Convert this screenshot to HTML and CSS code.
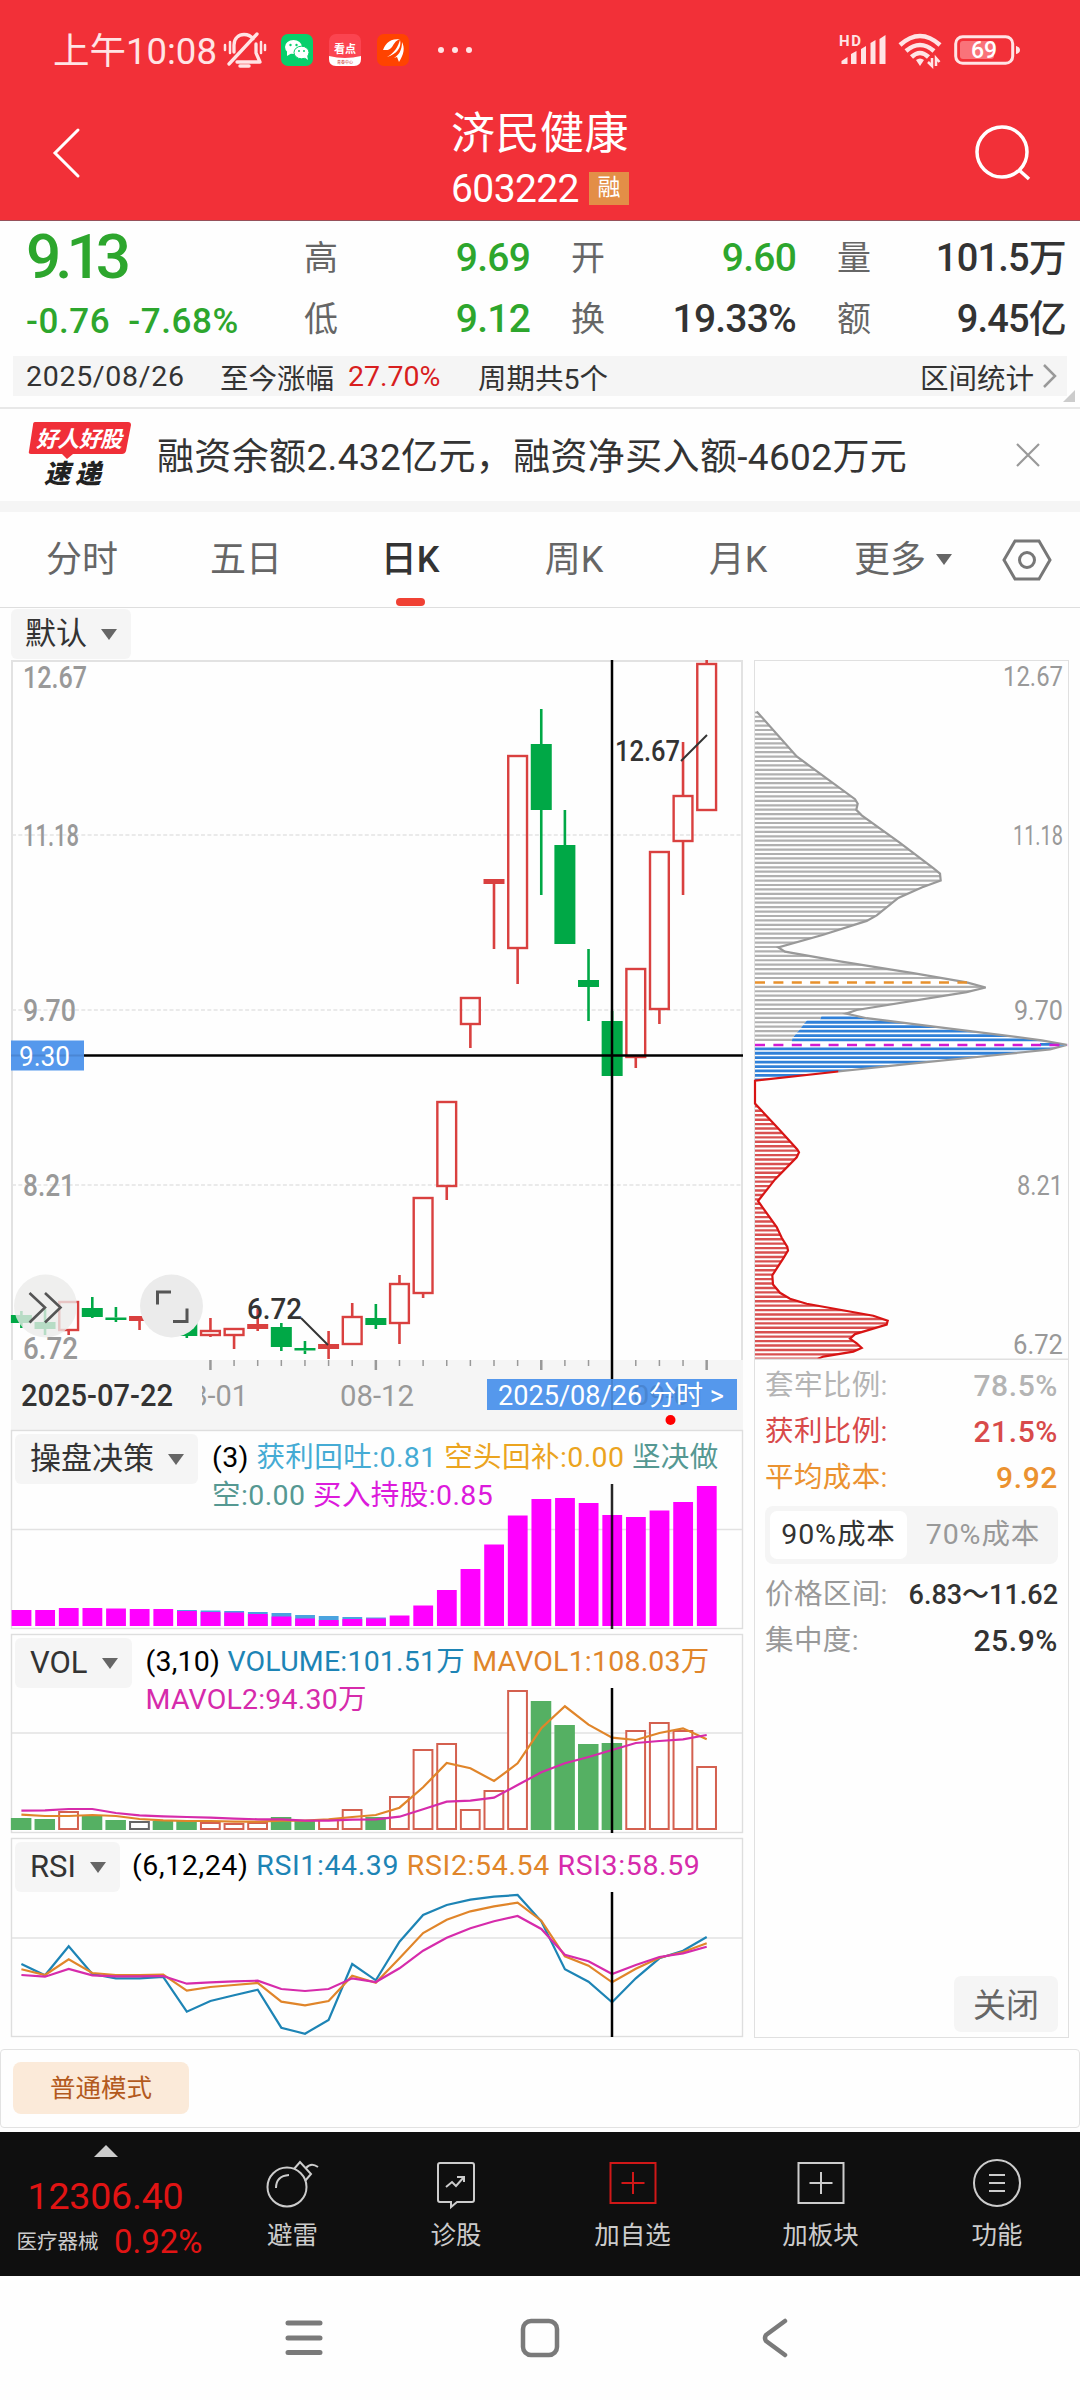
FILE: index.html
```html
<!DOCTYPE html>
<html lang="zh-CN">
<head>
    <meta charset="UTF-8">
    <title>济民健康 603222</title>
    <link rel="stylesheet" href="styles.css">
</head>
<body>
    <div class="page">
        <!-- 顶部 -->
        <header class="header">
            <div class="status-bar">
                <span class="clock">上午10:08</span>
                <svg class="bell" width="44" height="38" viewBox="0 0 44 38" fill="none" stroke="#ffe4e5" stroke-width="3.300" stroke-linecap="round" stroke-linejoin="round">
                    <path d="M34 3L6 33M11 21V14C11 7 16 3.500 21 3.500C25 3.500 28 5 30 8M33 13V22L37 31H14"/>
                    <path d="M2 14V19M7 11V22M38 11V22M42 14V19" stroke-width="2.500"/>
                    <path d="M17 35H26" stroke-width="3.500"/>
                </svg>
                <svg class="app-icon" width="32" height="32" viewBox="0 0 32 32">
                    <rect width="32" height="32" rx="7" fill="#07cf6b"/>
                    <ellipse cx="12.500" cy="13" rx="8.500" ry="7" fill="#fff"/>
                    <path d="M6 17l0 5 5-3z" fill="#fff"/>
                    <ellipse cx="20.500" cy="18.500" rx="7.500" ry="6.300" fill="#fff" stroke="#07cf6b"/>
                    <path d="M23 23l4 3-1-5z" fill="#fff"/>
                    <g fill="#07cf6b"><circle cx="9.500" cy="11" r="1.200"/><circle cx="15.500" cy="11" r="1.200"/><circle cx="18" cy="17" r="1"/><circle cx="23" cy="17" r="1"/></g>
                </svg>
                <svg class="app-icon" width="32" height="32" viewBox="0 0 32 32">
                    <rect width="32" height="32" rx="7" fill="#fb4450"/>
                    <path d="M0 22Q16 26 32 22V25Q32 32 25 32H7Q0 32 0 25Z" fill="#fff"/>
                    <text x="16" y="19" text-anchor="middle" font-size="11" font-weight="bold" fill="#fff">看点</text>
                    <text x="16" y="30" text-anchor="middle" font-size="4" fill="#c33">青春中心</text>
                </svg>
                <svg class="app-icon" width="32" height="32" viewBox="0 0 32 32">
                    <rect width="32" height="32" rx="7" fill="#ff4300"/>
                    <path d="M6 16C9 8 14 5 23 5C18 7 17 10 15 13C12 17 9 16 6 16Z" fill="#fff"/>
                    <path d="M10 23C17 19 21 13 23 6C25 13 20 20 10 23ZM17 24C22 21 25 16 25 8C28 14 27 20 22 28L20 23Z" fill="#fff"/>
                </svg>
                <svg class="dots" width="34" height="6" viewBox="0 0 34 6" fill="#ffe4e5"><circle cx="3" cy="3" r="3"/><circle cx="17" cy="3" r="3"/><circle cx="31" cy="3" r="3"/></svg>
                <svg class="signal" width="48" height="32" viewBox="0 0 48 32" fill="#ffe4e5">
                    <text x="0" y="12" font-size="15" font-weight="bold" textLength="22">HD</text>
                    <path d="M2.500 30V27L8.500 23V30ZM12 30V20L17.500 17V30ZM22 30V15L27 12V30ZM31.500 30V9L36.500 6V30ZM40.500 30V5L46.500 1V30Z"/>
                </svg>
                <svg class="wifi" width="44" height="34" viewBox="0 0 44 34" fill="none" stroke="#ffe4e5" stroke-width="4.500">
                    <path d="M2 12Q22 -6 42 12M8 18Q22 6 36 18M13.500 24Q22 16 30.500 24"/>
                    <path d="M18 27Q22 24 26 27L22 33Z" fill="#ffe4e5" stroke="none"/>
                    <path d="M34 25V33L30 29M38 33V25L41.500 29" stroke-width="2.500"/>
                </svg>
                <svg class="battery" width="67" height="30" viewBox="0 0 67 30">
                    <rect x="1.700" y="1.700" width="57" height="26.600" rx="7" fill="none" stroke="#ffe4e5" stroke-width="3"/>
                    <rect x="6" y="6" width="34" height="18" rx="3" fill="#f9737a"/>
                    <path d="M62 11V19Q66 18 66 15Q66 12 62 11Z" fill="#ffe4e5"/>
                    <text x="30" y="23" text-anchor="middle" font-size="23" font-weight="500" fill="#fff">69</text>
                </svg>
            </div>
            <div class="title-bar">
                <svg width="28" height="50" viewBox="0 0 28 50" fill="none" stroke="#fff" stroke-width="3" stroke-linecap="round"><path d="M25 2L2 25L25 48"/></svg>
                <div class="title">
                    <div class="stock-name">济民健康</div>
                    <div class="stock-code"><span>603222</span><i class="badge">融</i></div>
                </div>
                <svg width="56" height="56" viewBox="0 0 56 56" fill="none" stroke="#fff" stroke-width="3.500"><circle cx="27" cy="27" r="25"/><path d="M44 45L54 54"/></svg>
            </div>
        </header>

        <!-- 行情 -->
        <section class="quote">
            <div class="price-box">
                <div class="price">9.13</div>
                <div class="change"><span>-0.76</span><span>-7.68%</span></div>
            </div>
            <dl class="metric m1"><dt>高</dt><dd class="green">9.69</dd><dt>低</dt><dd class="green">9.12</dd></dl>
            <dl class="metric m2"><dt>开</dt><dd class="green">9.60</dd><dt>换</dt><dd>19.33%</dd></dl>
            <dl class="metric m3"><dt>量</dt><dd>101.5万</dd><dt>额</dt><dd>9.45亿</dd></dl>
        </section>
        <div class="period-wrap">
            <div class="period">
                <span class="date">2025/08/26</span>
                <span class="rise">至今涨幅</span>
                <span class="pct">27.70%</span>
                <span>周期共5个</span>
                <span class="stat">区间统计</span>
                <svg width="14" height="26" viewBox="0 0 14 26" fill="none" stroke="#999" stroke-width="2.500"><path d="M1 2L12 13L1 24"/></svg>
            </div>
            <i class="corner"></i>
        </div>

        <!-- 资讯 -->
        <section class="news">
            <svg class="news-logo" width="104" height="68" viewBox="0 0 104 68">
                <path d="M7 1H100Q103 1 103 4L98 30Q97 33 94 33H45L39 38L34 33H3Q0 33 1 30L5 4Q5 1 7 1Z" fill="#f02f38"/>
                <g font-style="italic">
                    <text x="8" y="26" font-size="22" font-weight="700" textLength="86" fill="#fff">好人好股</text>
                    <text x="16" y="62" font-size="26" font-weight="900" textLength="57" fill="#222">速递</text>
                </g>
            </svg>
            <span class="news-text">融资余额2.432亿元，融资净买入额-4602万元</span>
            <svg width="26" height="26" viewBox="0 0 26 26" fill="none" stroke="#999" stroke-width="2.200"><path d="M2 2L24 24M24 2L2 24"/></svg>
        </section>

        <nav class="tabs">
            <span>分时</span>
            <span>五日</span>
            <span class="active">日K</span>
            <span>周K</span>
            <span>月K</span>
            <span class="more">更多<i class="arrow"></i></span>
            <svg width="50" height="42" viewBox="0 0 50 42" fill="none" stroke="#777" stroke-width="3"><path d="M13 2H37L48 21L37 40H13L2 21Z"/><circle cx="25" cy="21" r="7.500"/></svg>
        </nav>
        <div class="default-row"><span class="select">默认<i class="arrow"></i></span></div>

        <!-- 图表 -->
        <main class="charts">
            <div class="left-col">
                <svg id="kline" width="732" height="770" viewBox="11 660 732 770"></svg>
                <div class="panel">
                    <svg id="decision" width="732" height="199" viewBox="11 1430 732 199"></svg>
                    <div class="panel-head">
                        <span class="select">操盘决策<i class="arrow"></i></span>
                        <div class="legend legend-decision">(3) <b class="c-sky">获利回吐:0.81</b> <b class="c-gold">空头回补:0.00</b> <b class="c-teal">坚决做<br>空:0.00</b> <b class="c-mag">买入持股:0.85</b></div>
                    </div>
                </div>
                <div class="panel">
                    <svg id="vol" width="732" height="199" viewBox="11 1634 732 199"></svg>
                    <div class="panel-head">
                        <span class="select">VOL<i class="arrow"></i></span>
                        <div class="legend legend-vol">(3,10) <b class="c-blue">VOLUME:101.51万</b> <b class="c-orange">MAVOL1:108.03万</b><br><b class="c-pink">MAVOL2:94.30万</b></div>
                    </div>
                </div>
                <div class="panel">
                    <svg id="rsi" width="732" height="199" viewBox="11 1838 732 199"></svg>
                    <div class="panel-head">
                        <span class="select">RSI<i class="arrow"></i></span>
                        <div class="legend legend-rsi">(6,12,24) <b class="c-blue">RSI1:44.39</b> <b class="c-orange">RSI2:54.54</b> <b class="c-pink">RSI3:58.59</b></div>
                    </div>
                </div>
            </div>

            <aside class="chips">
                <svg id="chip" width="313" height="699" viewBox="755 661 313 699"></svg>
                <div class="chip-info">
                    <p class="gray"><span>套牢比例:</span><b>78.5%</b></p>
                    <p class="red"><span>获利比例:</span><b>21.5%</b></p>
                    <p class="orange"><span>平均成本:</span><b>9.92</b></p>
                    <div class="toggle"><span class="on">90%成本</span><span>70%成本</span></div>
                    <p><span>价格区间:</span><b class="range">6.83～11.62</b></p>
                    <p><span>集中度:</span><b>25.9%</b></p>
                </div>
                <button class="close-btn">关闭</button>
            </aside>
        </main>

        <div class="mode-box"><span class="mode">普通模式</span></div>

        <!-- 底部工具栏 -->
        <footer class="toolbar">
            <div class="index">
                <i class="up"></i>
                <div class="index-value">12306.40</div>
                <div class="index-name"><span>医疗器械</span><b>0.92%</b></div>
            </div>
            <div class="tool t1">
                <svg width="54" height="50" viewBox="0 0 54 50" fill="none" stroke="#ccc" stroke-width="2"><circle cx="21" cy="28" r="19.500"/><path d="M10 29Q10 17 23 16M28 10L34 3L45 15L39 22M40 9Q45 3 52 8"/></svg>
                <span>避雷</span>
            </div>
            <div class="tool t2">
                <svg width="40" height="50" viewBox="0 0 40 50" fill="none" stroke="#ccc" stroke-width="2"><path d="M4 4H36Q38 4 38 6V41Q38 43 36 43H21L15 48V43H4Q2 43 2 41V6Q2 4 4 4Z"/><path d="M10 28L16 23L20 27L28 18M21 18H28V23"/></svg>
                <span>诊股</span>
            </div>
            <div class="tool t3">
                <svg width="48" height="50" viewBox="0 0 48 50" fill="none" stroke="#d01818" stroke-width="2"><path d="M1.500 4H46.500V44H1.500ZM24 13V35M12.500 24H35.500"/></svg>
                <span>加自选</span>
            </div>
            <div class="tool t4">
                <svg width="48" height="50" viewBox="0 0 48 50" fill="none" stroke="#ccc" stroke-width="2"><path d="M1.500 4H46.500V44H1.500ZM24 13V35M12.500 24H35.500"/></svg>
                <span>加板块</span>
            </div>
            <div class="tool t5">
                <svg width="48" height="50" viewBox="0 0 48 50" fill="none" stroke="#ccc" stroke-width="2"><circle cx="24" cy="24" r="23"/><path d="M16 16H32M16 24H32M16 32H32"/></svg>
                <span>功能</span>
            </div>
        </footer>

        <div class="sys-nav">
            <svg width="38" height="40" viewBox="0 0 38 40" fill="none" stroke="#7a7a7a" stroke-width="5" stroke-linecap="round"><path d="M3 5H35M3 20H35M3 34.500H35"/></svg>
            <svg class="home" width="40" height="40" viewBox="0 0 40 40" fill="none" stroke="#7a7a7a" stroke-width="4.500"><rect x="3" y="3" width="34" height="34" rx="8"/></svg>
            <svg width="26" height="40" viewBox="0 0 26 40" fill="none" stroke="#7a7a7a" stroke-width="4.500" stroke-linecap="round" stroke-linejoin="round"><path d="M23 3L4 17Q2 20 4 23L23 37"/></svg>
        </div>
    </div>
    <script src="script.js"></script>
</body>
</html>
```
FILE: styles.css
```css
* {
    box-sizing: border-box;
}
body {
    margin: 0;
    font-family: Roboto, "Noto Sans CJK SC", sans-serif;
    color: #333;
    background: #fefefe;
}
svg {
    display: block;
    flex: none;
    overflow: visible;
}
i, b {
    font-style: normal;
    font-weight: normal;
}
p, dl, dd {
    margin: 0;
}
.page {
    width: 1080px;
    height: 2400px;
    overflow: hidden;
}

/* 顶部 */
.header {
    height: 221px;
    background: #f23038;
    border-bottom: 1px solid #96505a;
}
.status-bar {
    display: flex;
    align-items: center;
    height: 100px;
    padding-left: 53px;
    color: #ffe4e5;
}
.clock {
    width: 170px;
    margin-top: -4px;
    font-size: 36.5px;
    letter-spacing: 0;
    white-space: nowrap;
}
.bell {
    margin-right: 14px;
}
.app-icon {
    margin-right: 16px;
}
.dots {
    margin-left: 13px;
}
.signal {
    margin-left: 367px;
}
.wifi {
    margin-left: 11px;
}
.battery {
    margin-left: 12px;
}
.title-bar {
    display: flex;
    justify-content: space-between;
    padding: 5px 49px 0 53px;
    color: #fff;
}
.title-bar > svg:first-child {
    margin-top: 23px;
}
.title-bar > svg:last-child {
    margin-top: 20px;
}
.title {
    margin-left: 24px;
    width: 178px;
}
.stock-name {
    font-size: 44px;
    line-height: 58px;
    letter-spacing: 0.5px;
    white-space: nowrap;
}
.stock-code {
    display: flex;
    justify-content: space-between;
    align-items: center;
    height: 51px;
    font-size: 39px;
    letter-spacing: -0.6px;
}
.badge {
    width: 40px;
    height: 33px;
    background: #e38e47;
    font-size: 23px;
    line-height: 32px;
    text-align: center;
    letter-spacing: 0;
}

/* 行情 */
.quote {
    display: flex;
    height: 135px;
    padding-left: 26px;
}
.price-box {
    width: 278px;
    color: #2da62d;
    font-weight: 500;
}
.price {
    height: 71px;
    font-size: 62px;
    line-height: 71px;
    letter-spacing: -6px;
}
.change {
    display: flex;
    gap: 18px;
    font-size: 35px;
    line-height: 60px;
    letter-spacing: 0.6px;
}
.metric {
    display: grid;
    grid-template-columns: 34px 1fr;
    grid-auto-rows: 61px;
    align-content: start;
    padding-top: 7px;
    line-height: 61px;
    white-space: nowrap;
}
.metric dt {
    font-size: 34px;
    color: #666;
}
.metric dd {
    font-size: 39px;
    font-weight: 500;
    letter-spacing: -0.8px;
    text-align: right;
}
.metric .green {
    color: #2da62d;
}
.m1 {
    width: 226px;
}
.m2 {
    width: 225px;
    margin-left: 41px;
}
.m3 {
    width: 229px;
    margin-left: 41px;
}
.m3 dd {
    font-size: 38px;
}
.period-wrap {
    position: relative;
    height: 53px;
    padding: 0 13px;
    border-bottom: 2px solid #e8e8e8;
}
.period {
    display: flex;
    align-items: center;
    height: 40px;
    padding: 0 10px 0 13px;
    background: #f5f5f5;
    font-size: 28.5px;
    white-space: nowrap;
}
.period .date {
    width: 194px;
    letter-spacing: 0.7px;
}
.period .rise {
    width: 128px;
}
.period .pct {
    width: 130px;
    color: #d81e1e;
}
.period .stat {
    margin-left: auto;
    margin-right: 9px;
}
.corner {
    position: absolute;
    right: 5px;
    bottom: 5px;
    border-left: 12px solid transparent;
    border-bottom: 12px solid #ccc;
}

/* 资讯 */
.news {
    display: flex;
    align-items: center;
    height: 103px;
    padding: 0 39px 0 28px;
    border-bottom: 11px solid #f5f5f5;
}
.news-text {
    margin: -3px auto 0 25px;
    font-size: 37px;
    letter-spacing: 0.35px;
    white-space: nowrap;
}

.tabs {
    display: flex;
    align-items: center;
    height: 96px;
    border-bottom: 1px solid #dedede;
    font-size: 36px;
    color: #666;
}
.tabs > span {
    position: relative;
    width: 164px;
    text-align: center;
    line-height: 96px;
}
.tabs .active {
    color: #333;
    font-weight: 500;
}
.tabs .active::after {
    content: "";
    position: absolute;
    left: 68px;
    bottom: 2px;
    width: 29px;
    height: 8px;
    border-radius: 4px;
    background: #f04134;
}
.tabs .more {
    display: flex;
    align-items: center;
    width: 182px;
    padding-left: 34px;
}
.tabs .more .arrow {
    margin-left: 10px;
}
.arrow {
    border: 8px solid transparent;
    border-top: 11px solid #666;
    border-bottom: 0;
}
.select {
    display: flex;
    align-items: center;
    gap: 14px;
    height: 50px;
    padding: 0 14px;
    background: #f5f5f5;
    border-radius: 6px;
    font-size: 31px;
    line-height: 46px;
    white-space: nowrap;
}
.default-row {
    display: flex;
    height: 52px;
    padding: 1px 0 0 11px;
}
.panel .select {
    height: 50px;
    padding-left: 15px;
}

/* 图表 */
.charts {
    display: flex;
    gap: 11px;
    height: 1389px;
    padding-left: 11px;
}
.left-col {
    width: 732px;
}
.panel {
    position: relative;
    height: 199px;
    margin-bottom: 5px;
}
.panel > svg {
    position: absolute;
    left: 0;
    top: 0;
}
.panel-head {
    position: relative;
    display: flex;
    align-items: flex-start;
    padding: 4px 0 0 4px;
}
.legend {
    padding: 5px 0 0 14px;
    font-size: 28.5px;
    line-height: 38px;
    color: #000;
    white-space: nowrap;
}
.legend-decision {
    letter-spacing: 0.42px;
}
.legend-vol {
    letter-spacing: 0.2px;
}
.legend-rsi {
    padding-left: 12px;
    letter-spacing: 0.62px;
}
.c-sky { color: #45abd4; }
.c-gold { color: #eba41f; }
.c-teal { color: #559892; }
.c-mag { color: #dc1adc; }
.c-blue { color: #1d84b5; }
.c-orange { color: #e0852a; }
.c-pink { color: #d62bab; }

.chips {
    display: flex;
    flex-direction: column;
    width: 315px;
    height: 1378px;
    border: 1px solid #e0e0e0;
}
.chip-info {
    padding: 3px 10px 0;
    font-size: 28.5px;
    color: #999;
}
.chip-info p {
    display: flex;
    justify-content: space-between;
    line-height: 46px;
}
.chip-info p span {
    letter-spacing: 0.4px;
}
.chip-info b {
    font-size: 30px;
    font-weight: 500;
    letter-spacing: 0.6px;
    color: #333;
}
.chip-info .range {
    font-size: 27px;
    letter-spacing: 0;
}
.chip-info .gray,
.chip-info .gray b {
    color: #b4b4b4;
}
.chip-info .red,
.chip-info .red b {
    color: #d84a4a;
}
.chip-info .orange,
.chip-info .orange b {
    color: #eb9230;
}
.toggle {
    display: flex;
    height: 58px;
    margin: 5px 0 8px;
    padding: 5px;
    background: #f5f5f5;
    border-radius: 8px;
    line-height: 48px;
    letter-spacing: 0.9px;
    text-align: center;
}
.toggle span {
    flex: 1;
    padding-left: 6px;
}
.toggle .on {
    flex: 0 0 137px;
    padding-left: 0;
    background: #fff;
    border-radius: 7px;
    color: #333;
}
.close-btn {
    align-self: flex-end;
    width: 104px;
    height: 56px;
    margin: auto 10px 5px;
    padding: 0 0 3px;
    border: 0;
    border-radius: 7px;
    background: #f5f5f5;
    color: #666;
    font-family: inherit;
    font-size: 33px;
}

.mode-box {
    width: 1080px;
    height: 79px;
    margin-bottom: 4px;
    padding: 12px;
    border: 1px solid #e2e2e2;
    border-radius: 4px;
}
.mode {
    display: block;
    width: 176px;
    height: 52px;
    border-radius: 8px;
    background: #fbead9;
    color: #b35a1e;
    font-size: 25.5px;
    line-height: 52px;
    text-align: center;
}

/* 底部工具栏 */
.toolbar {
    display: flex;
    height: 144px;
    background: #0f0f0f;
    color: #ccc;
}
.index {
    display: flex;
    flex-direction: column;
    align-items: center;
    width: 211px;
    padding-top: 13px;
}
.up {
    border: 12px solid transparent;
    border-bottom-color: #ccc;
    border-top: 0;
}
.index-value {
    margin-top: 12px;
    font-size: 37.5px;
    line-height: 54px;
    letter-spacing: -0.2px;
    color: #e11414;
}
.index-name {
    display: flex;
    align-items: center;
    justify-content: space-between;
    width: 186px;
    margin-top: 1px;
    margin-right: -8px;
    font-size: 20.5px;
    line-height: 36px;
    white-space: nowrap;
}
.index-name b {
    font-size: 33px;
    color: #e11414;
}
.tool {
    display: flex;
    flex-direction: column;
    align-items: center;
    gap: 8px;
    padding-top: 27px;
    font-size: 25.5px;
    line-height: 36px;
}
.t1 { width: 163px; }
.t2 { width: 164px; }
.t3 { width: 189px; }
.t4 { width: 187px; }
.t5 { width: 166px; }

.sys-nav {
    display: flex;
    align-items: center;
    justify-content: space-between;
    height: 124px;
    padding: 0 292px 0 285px;
}
.home {
    margin-right: 6px;
}
```
FILE: script.js
```js
const RED = '#d9403f';
const GREEN = '#00a846';
const STEP = 23.63;
const cx = i => 21.4 + STEP * i;
const CROSS = 612;

const line = (x1, y1, x2, y2, stroke, w = 2, extra = '') =>
    `<line x1="${x1}" y1="${y1}" x2="${x2}" y2="${y2}" stroke="${stroke}" stroke-width="${w}" ${extra}/>`;
const rect = (x, y, w, h, fill, extra = '') =>
    `<rect x="${x}" y="${y}" width="${w}" height="${h}" fill="${fill}" ${extra}/>`;
const text = (x, y, len, size, fill, str, extra = '') =>
    `<text x="${x}" y="${y}" font-size="${size}" fill="${fill}" textLength="${len}" lengthAdjust="spacingAndGlyphs" ${extra}>${str}</text>`;
const frame = (y, h, mid) =>
    rect(11.5, y + 0.5, 731, h - 1, 'none', 'stroke="#dedede" stroke-width="1.400"') + line(12, mid, 742, mid, '#e2e2e2', 1.3);
const curve = (ys, top, stroke) =>
    `<polyline points="${ys.map((y, i) => cx(i).toFixed(1) + ',' + (top + y / 3).toFixed(1)).join(' ')}" fill="none" stroke="${stroke}" stroke-width="2.200"/>`;

// [类型, 实体上沿, 实体下沿, 最高, 最低]  g=绿 r=红空心 s=红实心
const candles = [
    ['g', 1315, 1323, 1311, 1328], ['g', 1322, 1329, 1309, 1335], ['r', 1301, 1331, 1301, 1335],
    ['g', 1308, 1317, 1297, 1318], ['g', 1317.5, 1320, 1307, 1322], ['s', 1316, 1321, 1316, 1330],
    ['s', 1318, 1322, 1312, 1326], ['g', 1319, 1336, 1316, 1338], ['r', 1330, 1336, 1318, 1337],
    ['r', 1328, 1336, 1328, 1349], ['s', 1324, 1329, 1309, 1331], ['g', 1327, 1347, 1323, 1351],
    ['g', 1348, 1350.5, 1341, 1354], ['s', 1344, 1349, 1331, 1359], ['r', 1316, 1345, 1303, 1345],
    ['g', 1318, 1325, 1304, 1329], ['r', 1283, 1324, 1275, 1344], ['r', 1197, 1294, 1197, 1298],
    ['r', 1101, 1187, 1101, 1200], ['r', 997, 1025, 997, 1048], ['s', 879, 884, 879, 949],
    ['r', 755, 949, 755, 984], ['g', 744, 810, 709, 895], ['g', 845, 944, 810, 944],
    ['g', 980, 987, 949, 1021], ['g', 1021, 1076, 1011, 1076], ['r', 968, 1058, 968, 1068],
    ['r', 851, 1010, 851, 1024], ['r', 795, 842, 742, 895], ['r', 663, 811, 660, 811]
];

function drawKline() {
    let s = rect(12, 661, 730, 700, 'none', 'stroke="#e2e2e2" stroke-width="2"');
    [835, 1010, 1185].forEach(y => { s += line(12, y, 742, y, '#e4e4e4', 1.5, 'stroke-dasharray="4 2.300"'); });
    s += rect(11, 1360, 732, 70, '#f5f5f5');
    [['12.67', 688, 64], ['11.18', 846, 56], ['9.70', 1021, 53], ['8.21', 1196, 52], ['6.72', 1359, 55]].forEach(([t, y, w]) => {
        s += text(23, y, w, 31, '#999', t, 'font-weight="500"');
    });
    candles.forEach(([t, a, b, hi, lo], i) => {
        const x = cx(i);
        const c = t === 'g' ? GREEN : RED;
        if (hi < a) s += line(x, hi, x, a, c, 2.6);
        if (lo > b) s += line(x, b, x, lo, c, 2.6);
        if (t === 'r') s += rect(x - 9.4, a + 1, 18.8, Math.max(b - a - 2, 2), 'none', `stroke="${c}" stroke-width="2.400"`);
        else s += rect(x - 10.5, a, 21, b - a, c);
    });
    // 最低 / 最高标注
    s += line(301, 1318, 328, 1345, '#333') + text(247, 1319, 55, 30, '#333', '6.72', 'font-weight="500"');
    s += line(681, 761, 707, 735, '#333') + text(615, 761, 65, 30, '#333', '12.67', 'font-weight="500"');
    // 日期轴
    for (let i = 8; i < 30; i++) {
        const big = (i - 8) % 7 === 0;
        s += line(cx(i), 1360, cx(i), big ? 1370 : 1366, '#999', big ? 2.5 : 1.5);
    }
    s += text(175, 1406, 73, 30, '#999', '08-01') + rect(170, 1375, 32, 38, '#f5f5f5');
    s += text(21, 1406, 152, 31, '#333', '2025-07-22', 'font-weight="500"');
    s += text(340, 1406, 74, 30, '#999', '08-12');
    s += line(CROSS, 660, CROSS, 1380, '#000', 2.5) + line(11, 1055.5, 743, 1055.5, '#000', 2.5);
    s += rect(11, 1040.5, 73, 30, '#5598ec') + line(11, 1055.5, 84, 1055.5, '#4b86d4', 2) + text(19, 1066, 51, 28, '#fff', '9.30');
    s += rect(487, 1379, 250, 31, '#5598ec') + line(CROSS, 1379, CROSS, 1410, '#4a85d0', 2);
    s += text(633, 1405, 73, 28, '#4a85d0', '09-01');
    s += text(498, 1404.5, 226, 27, '#fff', '2025/08/26 分时 &gt;');
    s += '<circle cx="670.5" cy="1420" r="5" fill="#f00"/>';
    // 悬浮按钮
    s += '<circle cx="45.5" cy="1306" r="31.500" fill="#ebebe9" fill-opacity=".78"/>';
    s += '<path d="M29.500 1293L45 1307.500L29.500 1322.500M45 1293L60.500 1307.500L45 1322.500" fill="none" stroke="#555" stroke-width="2.600"/>';
    s += '<circle cx="171.5" cy="1306" r="31.500" fill="#ebebeb"/>';
    s += '<path d="M157.500 1304.500V1292H171M173 1321.500H187V1308.500" fill="none" stroke="#555" stroke-width="3"/>';
    document.getElementById('kline').innerHTML = s;
}

// 操盘决策柱顶
const hold = [1610, 1610, 1608, 1608, 1608.5, 1609, 1609, 1611, 1612, 1612.5, 1614, 1616.5, 1618.5, 1620, 1619, 1618.5,
    1615.5, 1605.5, 1590, 1569, 1544.5, 1515.5, 1499, 1498, 1503, 1515, 1517, 1510.5, 1502, 1486];
const profit = { 7: 1610, 8: 1610.5, 9: 1611, 10: 1612, 11: 1613, 12: 1615, 13: 1616, 14: 1617, 15: 1617.5 };

function drawDecision() {
    let s = frame(1430, 199, 1529.5);
    hold.forEach((y, i) => {
        const x = cx(i) - 9.8;
        if (profit[i]) s += rect(x, profit[i], 19.8, 1626 - profit[i], '#4aa3df');
        s += rect(x, y, 19.8, 1626 - y, '#f0f');
    });
    s += line(CROSS, 1484, CROSS, 1629, '#000', 2.5, 'stroke-opacity=".85"');
    document.getElementById('decision').innerHTML = s;
}

const vols = [['g', 1818], ['g', 1819], ['r', 1811], ['g', 1815], ['g', 1820], ['k', 1821], ['g', 1821], ['g', 1821],
    ['r', 1822], ['r', 1823], ['r', 1822], ['g', 1817], ['g', 1821], ['r', 1819], ['r', 1809], ['g', 1817],
    ['r', 1796], ['r', 1749], ['r', 1743], ['r', 1809], ['r', 1790], ['r', 1690], ['g', 1701], ['g', 1725],
    ['g', 1744], ['g', 1743], ['r', 1730], ['r', 1722], ['r', 1730], ['r', 1766]];
const ma1 = [344, 348, 348, 345, 348, 357, 361, 363, 363, 365, 365, 362, 362, 358, 351, 345, 323, 262, 189, 205, 243, 190, 85, 19, 74, 113, 120, 99, 85, 118];
const ma2 = [332, 331, 327, 327, 339, 346, 349, 351, 353, 356, 358, 358, 362, 362, 359, 358, 350, 328, 305, 302, 293, 255, 217, 190, 171, 150, 129, 123, 118, 105];

function drawVol() {
    let s = frame(1634, 199, 1733);
    vols.forEach(([t, y], i) => {
        const x = cx(i) - 10.5;
        if (t === 'g') s += rect(x, y, 20.5, 1830 - y, '#55b063');
        else s += rect(x + 1, y + 1, 18.8, 1828 - y, '#fff', `stroke="${t === 'k' ? '#666' : '#d4604f'}" stroke-width="2"`);
    });
    s += curve(ma1, 1700, '#e0852a') + curve(ma2, 1700, '#d62bab');
    s += line(CROSS, 1688, CROSS, 1833, '#000', 2.5);
    document.getElementById('vol').innerHTML = s;
}

const rsi1 = [792, 826, 739, 822, 835, 835, 831, 935, 903, 886, 869, 983, 1001, 960, 792, 841, 725, 645, 615, 599, 590, 585, 664, 808, 845, 907, 835, 775, 752, 711];
const rsi2 = [808, 825, 778, 819, 825, 825, 824, 872, 861, 855, 849, 905, 916, 903, 827, 848, 775, 699, 659, 634, 619, 608, 662, 769, 797, 847, 806, 773, 756, 730];
const rsi3 = [825, 830, 807, 826, 829, 829, 828, 851, 847, 844, 842, 867, 873, 867, 835, 846, 805, 752, 713, 685, 664, 648, 687, 764, 784, 822, 795, 771, 760, 740];

function drawRsi() {
    let s = frame(1838, 199, 1938);
    s += curve(rsi1, 1700, '#1d84b5') + curve(rsi2, 1700, '#e0852a') + curve(rsi3, 1700, '#d62bab');
    s += line(CROSS, 1892, CROSS, 2037, '#000', 2.5);
    document.getElementById('rsi').innerHTML = s;
}

// 筹码分布轮廓
const trapped = [[50, 134], [170, 232], [345, 325], [353, 335], [349, 348], [365, 360], [480, 420], [580, 475], [600, 487], [602, 502],
    [545, 517], [475, 540], [410, 578], [380, 590], [250, 620], [115, 648], [135, 657], [300, 678], [520, 704], [680, 724], [737, 735],
    [680, 745], [350, 784], [318, 792], [380, 802], [600, 822], [780, 838], [905, 850], [980, 860], [930, 870], [800, 880], [500, 902], [295, 918]];
const profitTop = [[295, 918], [45, 938]];
const profitable = [[45, 988], [115, 1042], [172, 1088], [177, 1094], [170, 1105], [105, 1153], [54, 1200], [110, 1257], [125, 1280],
    [142, 1300], [144, 1308], [130, 1325], [97, 1362], [99, 1382], [120, 1400], [150, 1413], [200, 1424], [400, 1450], [443, 1461],
    [440, 1469], [345, 1490], [330, 1500], [350, 1510], [365, 1520], [340, 1528], [250, 1539], [233, 1544]];
const nearCost = [[245, 796], [320, 796], [380, 802], [600, 822], [780, 838], [905, 850], [980, 860], [930, 870], [800, 880], [500, 902],
    [295, 918], [45, 938], [45, 855], [155, 855], [157, 846], [168, 836], [180, 826], [190, 816], [202, 806], [240, 806]];

const pts = arr => arr.map(([x, y]) => (740 + x / 3).toFixed(1) + ',' + (650 + y / 2.178).toFixed(1)).join(' ');

function hatch(id, poly, stroke, w) {
    let s = `<clipPath id="${id}"><polygon points="${pts(poly)}"/></clipPath><g clip-path="url(#${id})">`;
    for (let y = 712.3; y < 1360; y += 4.428) s += line(755, y, 1068, y, stroke, w);
    return s + '</g>';
}

function drawChip() {
    let s = hatch('c1', [[45, 134], ...trapped, [45, 938]], '#b0b0b0', 2.2);
    // 蓝色区先盖掉灰线
    s += `<polygon points="${pts(nearCost)}" fill="#fff"/>` + hatch('c2', nearCost, '#2f80d8', 2.8);
    s += hatch('c3', [...profitable, [45, 1544]], '#d95050', 2.4);
    s += line(755, 982.5, 967, 982.5, '#fff', 4) + line(755, 1045, 1040, 1045, '#fff', 4);
    s += `<polyline points="${pts(trapped)}" fill="none" stroke="#999" stroke-width="2.200"/>`;
    s += `<polyline points="${pts([...profitTop, ...profitable])}" fill="none" stroke="#d81414" stroke-width="2.200"/>`;
    s += line(755, 982.5, 967, 982.5, '#e8912d', 2.4, 'stroke-dasharray="10 8.400"');
    s += line(755, 1045, 1068, 1045, '#d21bd2', 2.4, 'stroke-dasharray="10 8.400"');
    [['12.67', 686, 60], ['11.18', 845, 50], ['9.70', 1020, 49], ['8.21', 1195, 46], ['6.72', 1354, 50]].forEach(([t, y, w]) => {
        s += text(1063 - w, y, w, 28.5, '#999', t);
    });
    s += line(755, 1359.3, 1068, 1359.3, '#e0e0e0', 1.4);
    document.getElementById('chip').innerHTML = s;
}

drawKline();
drawDecision();
drawVol();
drawRsi();
drawChip();
```
